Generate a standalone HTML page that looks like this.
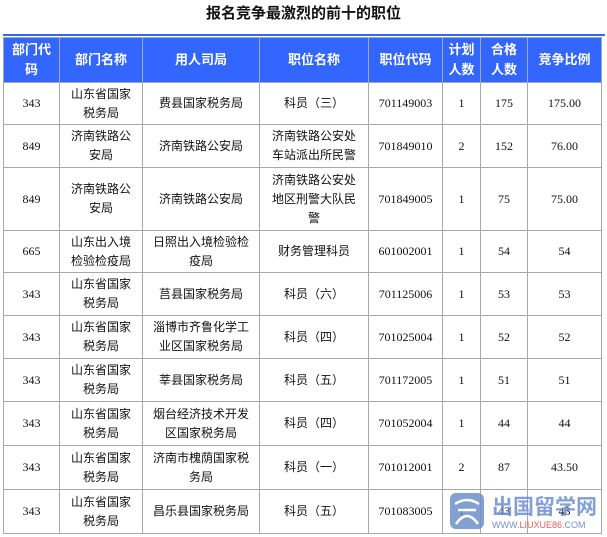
<!DOCTYPE html>
<html><head><meta charset="utf-8"><style>
body{margin:0;background:#fff;width:607px;height:532px;overflow:hidden;position:relative;font-family:"Liberation Serif","Noto Sans CJK SC",serif;}
.t{position:absolute;top:2px;left:0;width:607px;text-align:center;font:bold 15px "Liberation Sans","Noto Sans CJK SC",sans-serif;color:#111;}
.bl{position:absolute;left:3px;top:34px;width:602px;height:2px;background:#3366ff;}
table{position:absolute;left:3px;top:37px;width:598px;border-collapse:collapse;table-layout:fixed;}
td{border:1px solid #a8a8a8;text-align:center;font-size:12px;line-height:19px;color:#111;padding:0 7px;font-family:"Liberation Serif","Noto Sans CJK SC",serif;}
td.c{font-family:"Liberation Sans","Noto Sans CJK SC",sans-serif;}
tr.h td{background:#3366ff;color:#fff;font-weight:bold;font-size:13px;line-height:20px;font-family:"Liberation Sans","Noto Sans CJK SC",sans-serif;height:44px;border-color:#9ab;padding:0 4px;}
.wm{position:absolute;left:448px;top:490px;}
</style></head><body>
<div class="t">报名竞争最激烈的前十的职位</div>
<div class="bl"></div>
<table>
<colgroup><col style="width:56px"><col style="width:83px"><col style="width:117px"><col style="width:109px"><col style="width:74px"><col style="width:38px"><col style="width:47px"><col style="width:74px"></colgroup>
<tr class="h"><td>部门代码</td><td>部门名称</td><td>用人司局</td><td>职位名称</td><td>职位代码</td><td>计划人数</td><td>合格人数</td><td>竞争比例</td></tr>
<tr style="height:42px"><td>343</td><td class="c">山东省国家税务局</td><td class="c">费县国家税务局</td><td class="c">科员（三）</td><td>701149003</td><td>1</td><td>175</td><td>175.00</td></tr>
<tr style="height:43px"><td>849</td><td class="c">济南铁路公安局</td><td class="c">济南铁路公安局</td><td class="c">济南铁路公安处车站派出所民警</td><td>701849010</td><td>2</td><td>152</td><td>76.00</td></tr>
<tr style="height:63px"><td>849</td><td class="c">济南铁路公安局</td><td class="c">济南铁路公安局</td><td class="c">济南铁路公安处地区刑警大队民警</td><td>701849005</td><td>1</td><td>75</td><td>75.00</td></tr>
<tr style="height:42px"><td>665</td><td class="c">山东出入境检验检疫局</td><td class="c">日照出入境检验检疫局</td><td class="c">财务管理科员</td><td>601002001</td><td>1</td><td>54</td><td>54</td></tr>
<tr style="height:43px"><td>343</td><td class="c">山东省国家税务局</td><td class="c">莒县国家税务局</td><td class="c">科员（六）</td><td>701125006</td><td>1</td><td>53</td><td>53</td></tr>
<tr style="height:43px"><td>343</td><td class="c">山东省国家税务局</td><td class="c">淄博市齐鲁化学工业区国家税务局</td><td class="c">科员（四）</td><td>701025004</td><td>1</td><td>52</td><td>52</td></tr>
<tr style="height:43px"><td>343</td><td class="c">山东省国家税务局</td><td class="c">莘县国家税务局</td><td class="c">科员（五）</td><td>701172005</td><td>1</td><td>51</td><td>51</td></tr>
<tr style="height:44px"><td>343</td><td class="c">山东省国家税务局</td><td class="c">烟台经济技术开发区国家税务局</td><td class="c">科员（四）</td><td>701052004</td><td>1</td><td>44</td><td>44</td></tr>
<tr style="height:44px"><td>343</td><td class="c">山东省国家税务局</td><td class="c">济南市槐荫国家税务局</td><td class="c">科员（一）</td><td>701012001</td><td>2</td><td>87</td><td>43.50</td></tr>
<tr style="height:44px"><td>343</td><td class="c">山东省国家税务局</td><td class="c">昌乐县国家税务局</td><td class="c">科员（五）</td><td>701083005</td><td>1</td><td>43</td><td>43</td></tr>
</table>
<div class="wm">
<svg width="158" height="42" viewBox="0 0 158 42">
<rect x="2" y="3" width="34" height="36" rx="6" fill="#6d8fc8" opacity="0.85"/>
<path d="M7 14 Q19 6 31 14 M10 20 L28 20 M8 34 Q19 18 30 34" stroke="#fff" stroke-width="2.5" fill="none"/>
<text x="44" y="24" font-family="Liberation Sans,Noto Sans CJK SC,sans-serif" font-size="21" font-weight="bold" fill="#6f8ed0" opacity="0.85">出国留学网</text>
<text x="44" y="38" font-family="Liberation Sans,sans-serif" font-size="9" fill="#7a8fc4">WWW.<tspan fill="#e06060">LIUXUE86</tspan>.COM</text>
</svg>
</div>
</body></html>
